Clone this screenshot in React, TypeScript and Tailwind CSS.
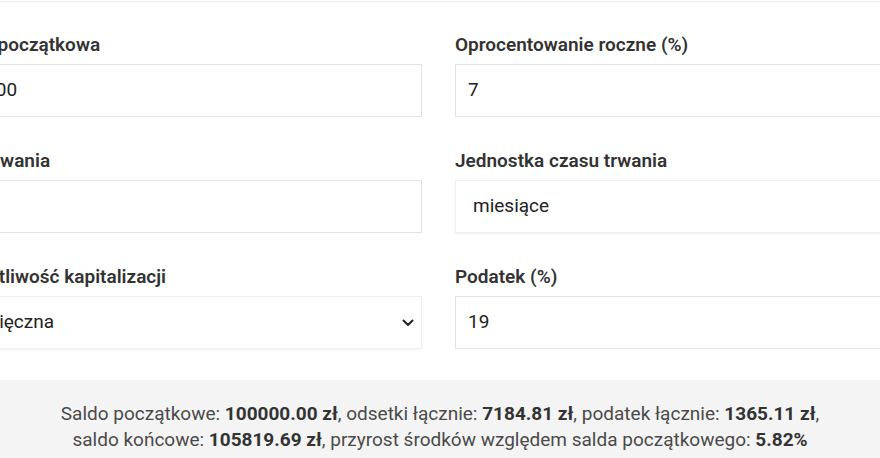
const font = { fontFamily: "Roboto, 'Liberation Sans', sans-serif" };

function Chevron() {
  return (
    <svg width="12" height="8" viewBox="0 0 12 8" fill="none" className="shrink-0">
      <path d="M1.5 1.5 6 6l4.5-4.5" stroke="#222" strokeWidth="2" strokeLinecap="round" strokeLinejoin="round" />
    </svg>
  );
}

function Field({ label, value, select }: { label: string; value: string; select?: boolean }) {
  return (
    <div className="flex flex-col">
      <label className="text-[19px] leading-6 font-semibold text-[#333] mb-[7px]">{label}</label>
      {select ? (
        <div className="h-[53px] flex items-center justify-between pl-[17px] pr-[7px] bg-white border border-[#efefef] shadow-[0_1px_3px_rgba(0,0,0,0.05)] text-[19px] text-[#222]">
          <span>{value}</span>
          {value === "miesięczna" && <Chevron />}
        </div>
      ) : (
        <div className="h-[53px] flex items-center px-3 bg-white border border-[#e3e3e3] text-[19px] text-[#222]">
          {value}
        </div>
      )}
    </div>
  );
}

export default function App() {
  return (
    <div className="w-[880px] h-[458px] overflow-hidden bg-white flex flex-col" style={font}>
      <div className="h-px mt-px bg-[#ececec]" />
      {/* form grid — wider than the viewport, cropped on both sides */}
      <div className="-ml-[60px] w-[997px] grid grid-cols-[482px_1fr] gap-x-[33px] gap-y-[32px] pt-[31px]">
        <Field label="Kwota początkowa" value="100000" />
        <Field label="Oprocentowanie roczne (%)" value="7" />
        <Field label="Czas trwania" value="12" />
        <Field label="Jednostka czasu trwania" value="miesiące" select />
        <Field label="Częstotliwość kapitalizacji" value="miesięczna" select />
        <Field label="Podatek (%)" value="19" />
      </div>
      {/* summary */}
      <div className="mt-[31px] flex-1 bg-[#f4f4f4] pt-[21px] text-center text-[19px] leading-[26px] text-[#4a4a4a]">
        Saldo początkowe: <b className="text-[#333]">100000.00 zł</b>, odsetki łącznie: <b className="text-[#333]">7184.81 zł</b>, podatek łącznie: <b className="text-[#333]">1365.11 zł</b>,
        <br />
        saldo końcowe: <b className="text-[#333]">105819.69 zł</b>, przyrost środków względem salda początkowego: <b className="text-[#333]">5.82%</b>
      </div>
    </div>
  );
}
